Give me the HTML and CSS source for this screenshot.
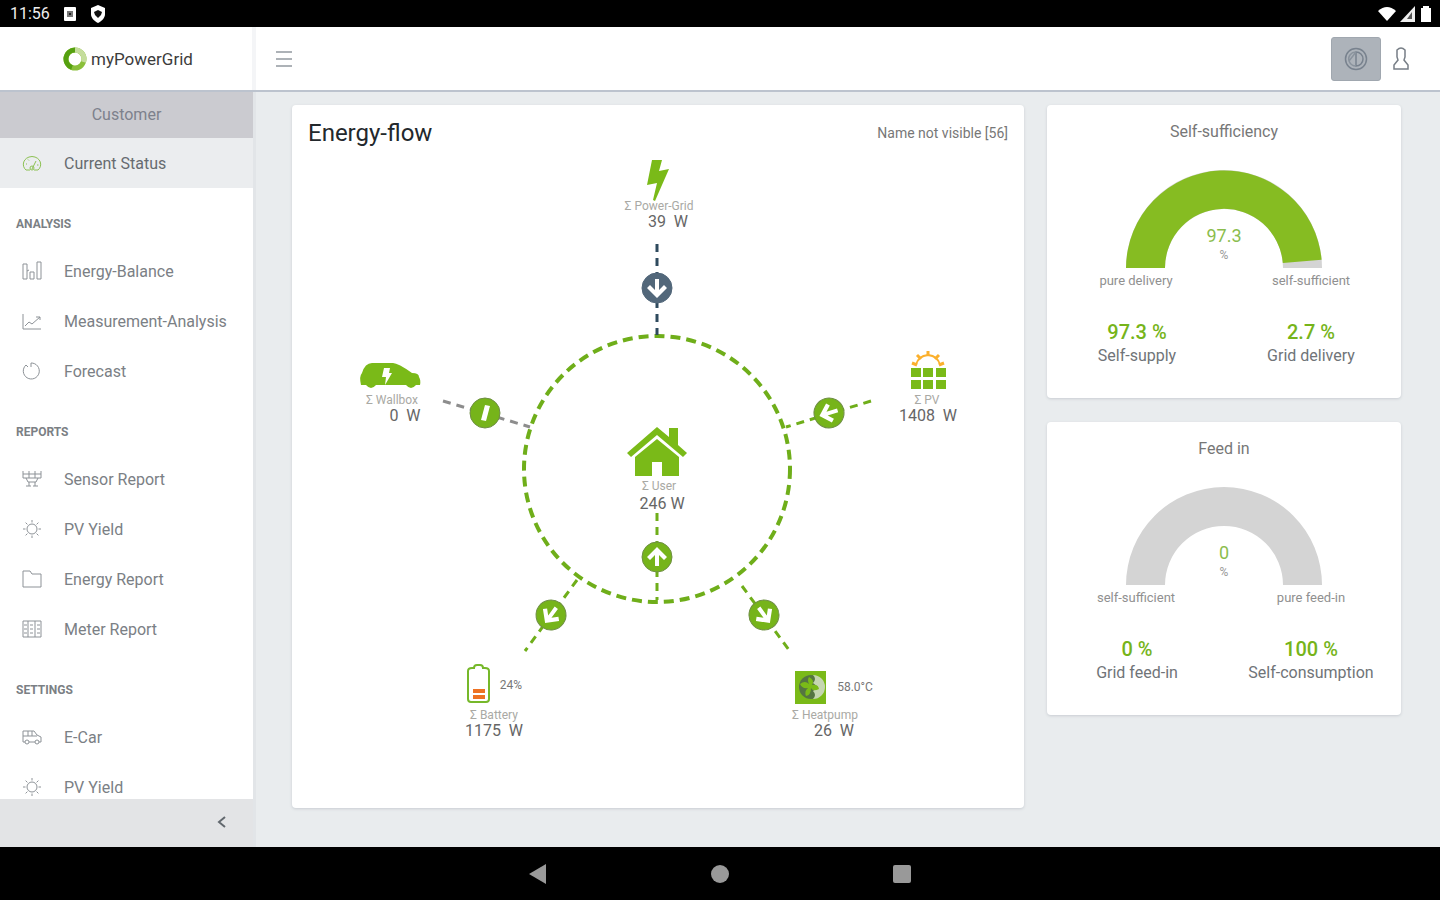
FILE: index.html
```html
<!DOCTYPE html>
<html lang="en">
<head>
<meta charset="utf-8">
<meta name="viewport" content="width=device-width, initial-scale=1">
<title>myPowerGrid</title>
<link rel="stylesheet" href="styles.css">
</head>
<body>
<svg class="defs" aria-hidden="true">
  <symbol id="sun" viewBox="0 0 20 20"><circle cx="10" cy="10" r="5"/><path d="M10 1v2.500M10 16.500V19M1 10h2.500M16.500 10H19M3.600 3.600l1.800 1.800M14.600 14.600l1.800 1.800M3.600 16.400l1.800-1.800M14.600 5.400l1.800-1.800"/></symbol>
  <symbol id="arrow" viewBox="-16 -16 32 32"><circle r="15" class="disc"/><path class="glyph" d="M-2-9H2V2L7-3 10 0 0 10-10 0-7-3-2 2Z"/></symbol>
</svg>

<div class="statusbar">
  <div class="status-group">
    <span class="clock">11:56</span>
    <svg width="12" height="14" viewBox="0 0 12 14"><rect width="12" height="14" rx="1" fill="#fff"/><path d="M3 4h6v6H3z" fill="#777"/><path d="M5 6h2v2H5z" fill="#222"/></svg>
    <svg width="16" height="18" viewBox="0 0 16 18"><path d="M8 0l7 3v6c0 4-3 7-7 9-4-2-7-5-7-9V3z" fill="#fff"/><path d="M8 5l4 2-1 3-3 3-3-3-1-3z" fill="#111"/></svg>
  </div>
  <div class="status-icons">
    <svg width="18" height="14" viewBox="0 0 18 14"><path d="M0 4Q9-4 18 4L9 14z" fill="#fff"/></svg>
    <svg width="16" height="16" viewBox="0 0 16 16"><path d="M15 0v16H0z" fill="#eee"/><path d="M12 6v7H7z" fill="#555"/></svg>
    <svg width="12" height="16" viewBox="0 0 12 16"><path d="M3 2V0h6v2h2v14H1V2z" fill="#fff"/></svg>
  </div>
</div>

<header class="header">
  <a class="brand" href="#">
    <svg width="24" height="26" viewBox="0 0 24 26" fill="none" stroke-width="5"><circle cx="12" cy="13" r="9" stroke="#8abf3a"/><path d="M12 4a9 9 0 0 1 8.500 12" stroke="#c5dd9c"/><path d="M9 21.500A9 9 0 0 1 12 4" stroke="#55a010"/></svg>
    <span>myPowerGrid</span>
  </a>
  <button class="icon-btn menu" aria-label="Toggle menu"><svg width="18" height="18" viewBox="0 0 18 18" stroke="#9299a0" stroke-width="1.500"><path d="M1 2h16M1 9h16M1 16h16"/></svg></button>
  <div class="tools">
    <button class="contrast" aria-label="Contrast"><svg width="24" height="26" viewBox="0 0 24 26" fill="none" stroke="#78828e" stroke-width="1.500"><circle cx="12" cy="13" r="10.500"/><path d="M12 6v14a7 7 0 0 0 0-14z"/><path d="M12 6 5 15M12 6a7 7 0 0 0-7 9q2 5 7 5" stroke="#8a939d"/></svg></button>
    <button class="icon-btn" aria-label="Account"><svg width="20" height="26" viewBox="0 0 20 26" fill="none" stroke="#777e86" stroke-width="1.500"><path d="M6 4q4-4 8 0v7l-1 3 4 5v4H3v-4l4-5-1-3z"/></svg></button>
  </div>
</header>

<div class="body">
  <aside class="sidebar">
    <button class="customer">Customer</button>
    <nav class="nav">
      <a class="item active" href="#"><svg class="ico" viewBox="0 0 20 20"><path d="M4 17C-1 13 1 4 10 3.500c9 .5 11 9.500 6 13.500h-4M4 17h4M10 16l4-8M4 11h1M6 6.500l1 1M15 12h1.500"/><circle cx="10" cy="15" r="2"/></svg>Current Status</a>
      <h2 class="group">Analysis</h2>
      <a class="item" href="#"><svg class="ico" viewBox="0 0 20 20"><path d="M1 3h4v15H1zM8 11h4v7H8zM15 1h4v17h-4zM5 10l2-1"/></svg>Energy-Balance</a>
      <a class="item" href="#"><svg class="ico" viewBox="0 0 20 20"><path d="M1 3v15h18M3 15l4-4 3 2 8-7M14 6h4v3"/></svg>Measurement-Analysis</a>
      <a class="item" href="#"><svg class="ico" viewBox="0 0 20 20"><path d="M9 2a8 8 0 1 1-5 2M9 2v4M4 4l2 2"/></svg>Forecast</a>
      <h2 class="group">Reports</h2>
      <a class="item" href="#"><svg class="ico" viewBox="0 0 20 20"><path d="M1 2v7h18V2M1 5h18M7 2v7M13 2v7M4 9l2 4h8l2-4M7 13v4M13 13v4M4 17h5M11 17h5"/></svg>Sensor Report</a>
      <a class="item" href="#"><svg class="ico"><use href="#sun"/></svg>PV Yield</a>
      <a class="item" href="#"><svg class="ico" viewBox="0 0 20 20"><path d="M1 18V2h7l2 3h9v13z"/></svg>Energy Report</a>
      <a class="item" href="#"><svg class="ico" viewBox="0 0 20 20"><path d="M1 2h18v16H1zM6 2v16M13 2v16M8 6h3M8 10h3M8 14h3M15 6h3M15 10h3M15 14h3M2 6h3M2 10h3M2 14h3"/></svg>Meter Report</a>
      <h2 class="group">Settings</h2>
      <a class="item" href="#"><svg class="ico" viewBox="0 0 20 20"><path d="M3 15H1V4h11l3 4 4 2v5h-2M7 15h6M1 9h14M6 4v5M10 4v5"/><circle cx="5" cy="15" r="2"/><circle cx="15" cy="15" r="2"/></svg>E-Car</a>
      <a class="item" href="#"><svg class="ico"><use href="#sun"/></svg>PV Yield</a>
    </nav>
    <button class="collapse" aria-label="Collapse sidebar"><svg width="10" height="12" viewBox="0 0 10 12" fill="none" stroke="#62686e" stroke-width="2"><path d="M8 1 2 6l6 5"/></svg></button>
  </aside>

  <main class="main">
    <section class="card flow">
      <div class="flow-head"><h1>Energy-flow</h1><span>Name not visible [56]</span></div>
      <svg class="diagram" viewBox="-365 -317 732 640" role="img" aria-label="Energy flow">
        <circle class="line ring" r="133"/>
        <path class="line dark" d="M0-225V-134"/>
        <path class="line idle" d="M-214-68-127-42"/>
        <path class="line" d="M214-68 129-42"/>
        <path class="line" d="M0 44V131"/>
        <path class="line" d="M-80 111-132 182"/>
        <path class="line" d="M85 117 132 181"/>

        <g transform="translate(0 -181)" class="dark-disc"><use href="#arrow" x="-16" y="-16" width="32" height="32"/></g>
        <g transform="translate(0 88) rotate(180)"><use href="#arrow" x="-16" y="-16" width="32" height="32"/></g>
        <g transform="translate(172 -56) rotate(73)"><use href="#arrow" x="-16" y="-16" width="32" height="32"/></g>
        <g transform="translate(-106 146) rotate(36)"><use href="#arrow" x="-16" y="-16" width="32" height="32"/></g>
        <g transform="translate(107 146) rotate(-36)"><use href="#arrow" x="-16" y="-16" width="32" height="32"/></g>
        <g transform="translate(-172 -56)"><circle r="15" class="disc"/><path class="glyph" d="M0-8 5-7 1 8-4 7z"/></g>

        <path class="green" d="M-5-309H5L2-298 12-300-2-268-4-269 0-286-10-284Z"/>
        <text class="name" x="2" y="-259">Σ Power-Grid</text>
        <text class="val" x="11" y="-242">39  W</text>

        <path class="green" d="M-296-84q-2-9 1-12 3-10 10-10h21q5 0 19 10 7 0 7 4 2 3 1 8h-4q-5 6-10 0h-30q-5 6-10 0z"/>
        <path fill="#fff" d="M-273-101h6l-1 5 3 0-7 12 1-8h-4z"/>
        <text class="name" x="-265" y="-65">Σ Wallbox</text>
        <text class="val" x="-252" y="-48">0  W</text>

        <path class="green" d="M254-101h10v9h-10zM266-101h10v9h-10zM279-101h10v9h-10zM254-89h10v9h-10zM266-89h10v9h-10zM279-89h10v9h-10z"/>
        <path d="M259-104q2-9 12-10 10 1 12 10" fill="none" stroke="#fbb02d" stroke-width="2"/>
        <path d="M255-106l5 2M260-114l4 4M271-118v4M282-114l-4 4M287-106l-5 2" stroke="#fbb02d" stroke-width="3"/>
        <text class="name" x="270" y="-65">Σ PV</text>
        <text class="val" x="271" y="-48">1408  W</text>

        <path class="green" d="M0-42 12-32V-41H21V-24L30-16 26-12 0-34-26-12-30-16Z"/>
        <path class="green" d="M0-30 22-12V7H5V-7H-5V7H-22V-12Z"/>
        <text class="name" x="2" y="21">Σ User</text>
        <text class="val" x="5" y="40">246 W</text>

        <path d="M-189 202q0-3 4-3h2q0-3 3-3h3q3 0 3 3h2q4 0 4 3v28q0 3-3 3h-15q-3 0-3-3z" fill="none" stroke="#76b82a" stroke-width="2"/>
        <path d="M-184 222h12M-184 228h12" stroke="#ee7223" stroke-width="4"/>
        <text class="side" x="-146" y="220">24%</text>
        <text class="name" x="-163" y="250">Σ Battery</text>
        <text class="val" x="-163" y="267">1175  W</text>

        <path class="green" d="M138 202h31v33h-31z"/>
        <circle cx="154" cy="218" r="12" fill="#557541"/>
        <path d="M156 206a12 12 0 0 1 0 24q4-4 0-8l5-4-5-4q4-4 0-8" fill="#c5d6b0"/>
        <path class="green" d="M152 208q6 3 3 8 6-1 7 4-6 3-8-1 0 7-5 8-2-5 2-8-6 1-8-4 5-4 9 0-2-4 0-7"/>
        <text class="side" x="198" y="222">58.0°C</text>
        <text class="name" x="168" y="250">Σ Heatpump</text>
        <text class="val" x="177" y="267">26  W</text>
      </svg>
    </section>

    <div class="gauges">
      <section class="card gauge">
        <h2>Self-sufficiency</h2>
        <svg viewBox="-177 -104 354 130" role="img" aria-label="Self-sufficiency 97.3 %">
          <path class="track" d="M-98 0A98 98 0 0 1 98 0H59A59 59 0 0 0-59 0Z"/>
          <path class="fill" d="M-98 0A98 98 0 0 1 97.600-8.300L58.800-5A59 59 0 0 0-59 0Z"/>
          <text class="num" y="-26">97.3</text><text class="pct" y="-9">%</text>
          <text class="end" x="-88" y="17">pure delivery</text><text class="end" x="87" y="17">self-sufficient</text>
        </svg>
        <dl class="stats"><div><dt>Self-supply</dt><dd>97.3 %</dd></div><div><dt>Grid delivery</dt><dd>2.7 %</dd></div></dl>
      </section>
      <section class="card gauge">
        <h2>Feed in</h2>
        <svg viewBox="-177 -104 354 130" role="img" aria-label="Feed in 0 %">
          <path class="track" d="M-98 0A98 98 0 0 1 98 0H59A59 59 0 0 0-59 0Z"/>
          <text class="num" y="-26">0</text><text class="pct" y="-9">%</text>
          <text class="end" x="-88" y="17">self-sufficient</text><text class="end" x="87" y="17">pure feed-in</text>
        </svg>
        <dl class="stats"><div><dt>Grid feed-in</dt><dd>0 %</dd></div><div><dt>Self-consumption</dt><dd>100 %</dd></div></dl>
      </section>
    </div>
  </main>
</div>

<footer class="softkeys">
  <button aria-label="Back"><svg width="20" height="22" viewBox="0 0 20 22"><path d="M18 1v20L1 11z" fill="#999"/></svg></button>
  <button aria-label="Home"><svg width="20" height="20" viewBox="0 0 20 20"><circle cx="10" cy="10" r="9" fill="#999"/></svg></button>
  <button aria-label="Recents"><svg width="20" height="20" viewBox="0 0 20 20"><rect x="1" y="1" width="18" height="18" rx="2" fill="#999"/></svg></button>
</footer>
</body>
</html>
```
FILE: styles.css
```css
* { box-sizing: border-box; }
body { margin: 0; height: 100vh; display: flex; flex-direction: column; overflow: hidden; font-family: Roboto, "Liberation Sans", sans-serif; color: #55595e; background: #e9ecee; }
button { border: 0; background: none; padding: 0; font: inherit; color: inherit; cursor: pointer; }
a { color: inherit; text-decoration: none; }
h1, h2, dl, dd { margin: 0; font-weight: 400; }
svg { display: block; }
.defs { position: absolute; width: 0; height: 0; }

.statusbar { flex: none; height: 27px; display: flex; justify-content: space-between; align-items: center; padding: 0 8px 0 10px; background: #000; color: #eee; }
.status-group { display: flex; align-items: center; gap: 14px; }
.clock { font-size: 16px; }
.status-icons { display: flex; align-items: center; gap: 4px; }

.header { flex: none; height: 65px; display: flex; align-items: center; background: #fff; border-bottom: 2px solid #bcc3ce; }
.brand { width: 256px; height: 100%; display: flex; align-items: center; justify-content: center; gap: 4px; padding-left: 4px; border-right: 4px solid #f4f5f7; font-size: 17px; color: #3c3c3c; }
.icon-btn { padding: 4px; }
.menu { margin-left: 15px; }
.tools { margin-left: auto; display: flex; align-items: center; gap: 6px; padding-right: 25px; }
.contrast { width: 50px; height: 44px; display: grid; place-items: center; border-radius: 3px; background: #adb3ba; border: 1px solid #a0a7af; }

.body { flex: 1; min-height: 0; display: flex; }
.sidebar { flex: none; width: 256px; display: flex; flex-direction: column; background: #fff; border-right: 3px solid #e2e5e8; }
.customer { flex: none; height: 46px; padding-bottom: 2px; background: #cbcbd0; color: #7d818c; font-size: 16px; }
.nav { flex: 1; min-height: 0; overflow: hidden; }
.item { height: 50px; display: flex; align-items: center; gap: 22px; padding-left: 22px; font-size: 16px; color: #7b8085; }
.item.active { background: #ebedef; color: #666b70; }
.ico { width: 20px; height: 20px; fill: none; stroke: #8d9297; stroke-width: 1; }
.active .ico { stroke: #8cc152; }
.group { padding: 28px 16px 14px; font-size: 12px; line-height: 16px; font-weight: 700; text-transform: uppercase; color: #7b7f84; }
.collapse { flex: none; height: 48px; display: flex; align-items: center; justify-content: flex-end; padding: 0 26px 2px 0; background: #e3e4e6; }

.main { flex: 1; min-width: 0; display: grid; grid-template-columns: 732fr 354fr; gap: 23px; align-items: start; padding: 13px 39px 0 36px; }
.card { background: #fff; border-radius: 4px; box-shadow: 0 1px 3px #c9cdd2; }
.flow-head { display: flex; align-items: center; justify-content: space-between; padding: 14px 16px 0; font-size: 14px; color: #777; }
.flow-head h1 { font-size: 24px; line-height: 28px; color: #23282c; }
.diagram { width: 100%; margin: 5px 0 16px; }
.line { fill: none; stroke: #6fae1a; stroke-width: 3; stroke-dasharray: 8 6; }
.line.ring { stroke-width: 4; stroke-dasharray: 10 6; }
.line.dark { stroke: #2f4a5e; }
.line.idle { stroke: #8d8d8d; }
.disc { fill: var(--disc, #76b41a); stroke: var(--disc-edge, #6f8f45); stroke-width: 1; }
.dark-disc { --disc: #52677a; --disc-edge: #52677a; }
.glyph { fill: #fff; }
.green { fill: #7aba18; }
.diagram text { text-anchor: middle; white-space: pre; }
.name { font-size: 12px; fill: #a9a9a4; }
.val { font-size: 16px; fill: #666; }
.side { font-size: 12px; fill: #777; }

.gauges { display: grid; gap: 24px; }
.gauge { padding: 16px 0 30px; text-align: center; }
.gauge h2 { font-size: 16px; line-height: 22px; color: #777; }
.gauge svg { width: 100%; margin: 21px 0 26px; }
.gauge text { text-anchor: middle; }
.track { fill: #d4d4d4; }
.fill { fill: #86bc22; }
.num { font-size: 18px; fill: #8bbd4d; }
.pct { font-size: 12px; fill: #999; }
.end { font-size: 13px; fill: #909090; }
.stats { display: grid; grid-template-columns: 1fr 1fr; padding: 0 3px; }
.stats div { display: flex; flex-direction: column-reverse; }
.stats dt { font-size: 16px; line-height: 24px; color: #707478; }
.stats dd { font-size: 20px; line-height: 24px; font-weight: 500; color: #76b41a; }

.softkeys { flex: none; height: 53px; display: flex; justify-content: center; align-items: center; gap: 162px; background: #000; }
```
